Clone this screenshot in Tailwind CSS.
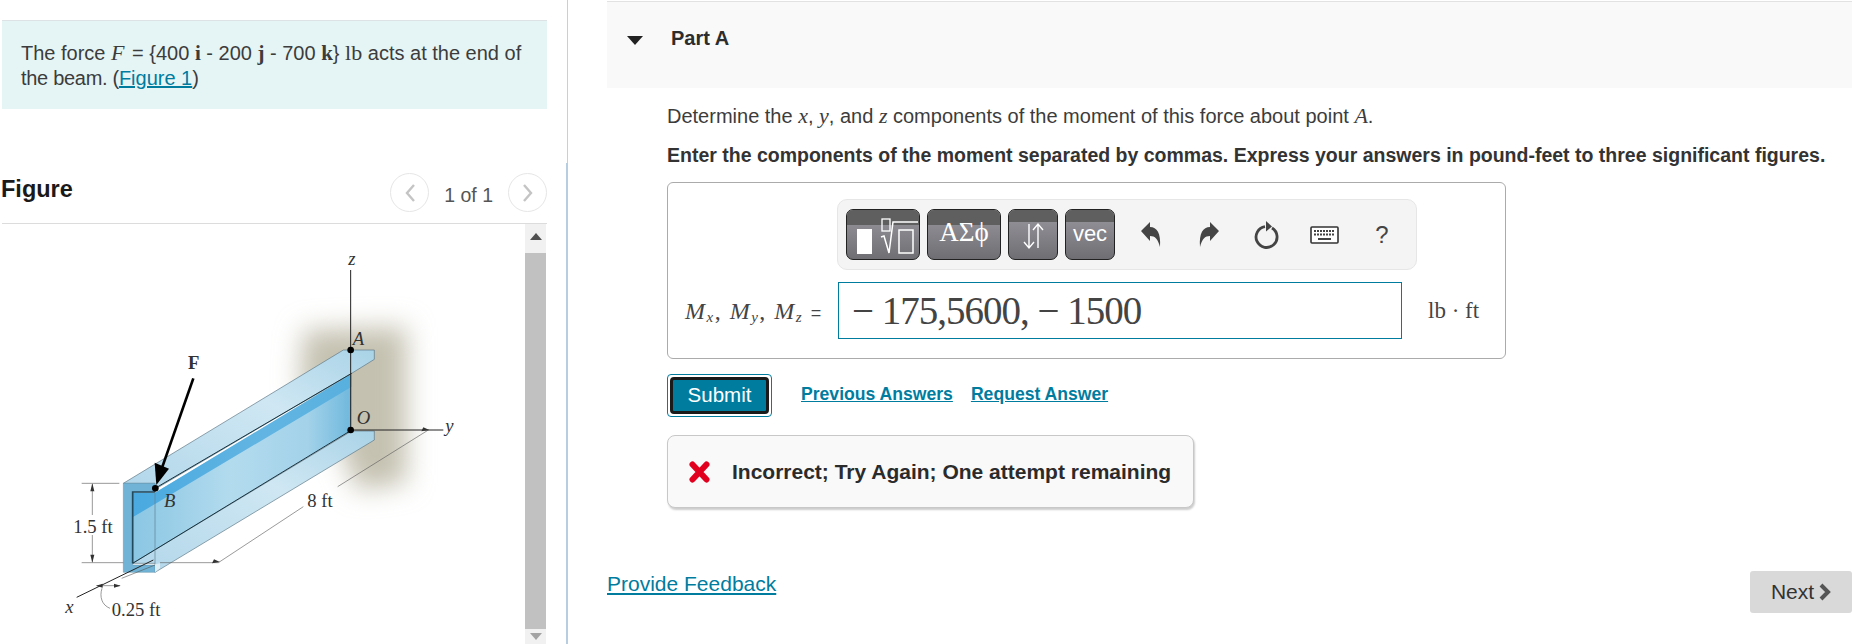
<!DOCTYPE html>
<html lang="en">
<head>
  <meta charset="UTF-8" />
  <title>Part A</title>
  <script src="https://cdn.jsdelivr.net/npm/@tailwindcss/browser@4"></script>
</head>
<body class="bg-white h-[644px] overflow-hidden flex font-['Liberation_Sans',Arial,sans-serif] text-[#333]">

  <!-- Left column -->
  <div class="w-[566px] h-[644px] shrink-0 pl-[2px] pt-[20px] overflow-hidden">
    <div class="w-[545px] h-[89px] bg-[#e5f5f6] border-t border-[#dde3e4] pl-[19px] pt-[19px] text-[20px] leading-[25px] text-[#3c3c3c]">
      The force <i class="font-['Liberation_Serif',serif] text-[22px] mr-[2px]">F</i> = {400 <b class="font-['Liberation_Serif',serif] text-[21px]">i</b> - 200 <b class="font-['Liberation_Serif',serif] text-[21px]">j</b> - 700 <b class="font-['Liberation_Serif',serif] text-[21px]">k</b>} <span class="font-['Liberation_Serif',serif] text-[22px]">lb</span> acts at the end of<br>
      <span class="tracking-[-0.3px]">the beam. (</span><a class="text-[#007c9f] underline">Figure 1</a>)
    </div>

    <div class="w-[545px] h-[115px] border-b border-[#dcdcdc] flex items-end justify-between pb-[11px]">
      <h2 class="text-[23.5px] leading-[28px] font-bold text-[#1a1a1a] mb-[9px] ml-[-1px]">Figure</h2>
      <div class="flex items-center gap-[15px]">
        <button class="w-[39px] h-[39px] rounded-full border border-[#e6e6e6] flex items-center justify-center">
          <svg width="12" height="20" viewBox="0 0 12 20" fill="none" stroke="#c4c4c4" stroke-width="2.4"><path d="M10 2 3 10l7 8"/></svg>
        </button>
        <span class="text-[19.5px] text-[#555] relative top-[3px]">1 of 1</span>
        <button class="w-[39px] h-[39px] rounded-full border border-[#e6e6e6] flex items-center justify-center">
          <svg width="12" height="20" viewBox="0 0 12 20" fill="none" stroke="#c4c4c4" stroke-width="2.4"><path d="M2 2l7 8-7 8"/></svg>
        </button>
      </div>
    </div>

    <div class="relative w-[545px] h-[420px]">
      <svg class="absolute left-[38px] top-[6px]" width="420" height="414" viewBox="0 0 1260 1242">
        <defs>
          <filter id="blur" x="-50%" y="-50%" width="200%" height="200%"><feGaussianBlur stdDeviation="40"/></filter>
          <filter id="soft"><feGaussianBlur stdDeviation="1.2"/></filter>
          <linearGradient id="web" x1="0" y1="0" x2="1" y2="0">
            <stop offset="0" stop-color="#8ac6e3"/><stop offset="0.45" stop-color="#b3dbee"/><stop offset="0.8" stop-color="#a3d2e9"/><stop offset="1" stop-color="#6fb8dd"/>
          </linearGradient>
          <linearGradient id="band" x1="0" y1="0" x2="1" y2="0">
            <stop offset="0" stop-color="#4aa9e0"/><stop offset="0.6" stop-color="#62b5e2"/><stop offset="1" stop-color="#58b0de"/>
          </linearGradient>
          <linearGradient id="flange" x1="0" y1="1" x2="1" y2="0">
            <stop offset="0" stop-color="#b2d7ea"/><stop offset="0.6" stop-color="#cfe7f3"/><stop offset="1" stop-color="#a9d3e7"/>
          </linearGradient>
        </defs>
        <path d="M790 300 1100 290 1100 760 950 780 880 600 780 480Z" fill="#c4c1b0" filter="url(#blur)"/>
        <g filter="url(#soft)">
          <!-- channel -->
          <path d="M278 788 345 788 935 432V600L278 1000Z" fill="url(#web)"/>
          <path d="M278 788 345 788 935 432V470L278 862Z" fill="url(#band)"/>
          <path d="M250 760 910 360H1003V388L935 430 350 775 345 760Z" fill="url(#flange)" stroke="#5c7684" stroke-width="2"/>
          <path d="M278 1000 935 603H1003V630L345 1027 345 1000Z" fill="url(#flange)" stroke="#5c7684" stroke-width="2"/>
          <path d="M250 760H345V786H278V1005H345V1027H250Z" fill="#6fb3d6" stroke="#5f8ea6" stroke-width="1.5"/>
          <path d="M335 1005H345V1027L360 1015V1000Z" fill="#dcedf5"/>
          <path d="M278 1000V786H345" fill="none" stroke="#24495c" stroke-width="5"/>
          <path d="M278 1000 935 600M345 775 935 430" fill="none" stroke="#17323f" stroke-width="3"/>
          <path d="M345 785V1000" stroke="#5d7f90" stroke-width="2"/>
          <!-- axes -->
          <path d="M932 120V600M935 600H1210M110 1102 340 990" fill="none" stroke="#222" stroke-width="3"/>
          <!-- dimensions -->
          <g fill="none" stroke="#555" stroke-width="1.8">
            <path d="M125 760H238M125 998H250M157 762V855M157 915V996M360 998H535M535 998 790 830M893 770 1165 600"/>
            <path d="M170 1067H240M245 1045 345 1005M186 1075C178 1100 185 1125 210 1135"/>
          </g>
          <path d="M157 760l-6 24h12ZM157 998l-6-24h12ZM540 996l-24 4 6 -12ZM1168 600l-24 4 6 -12ZM168 1067l20-6v12ZM242 1067l-20-6v12Z" fill="#333"/>
          <!-- force -->
          <path d="M460 445 362 725" stroke="#000" stroke-width="8" fill="none"/>
          <path d="M349 765 344 698 387 716Z" fill="#000"/>
          <circle cx="932" cy="360" r="10" fill="#000"/><circle cx="932" cy="600" r="10" fill="#000"/><circle cx="346" cy="775" r="10" fill="#000"/>
        </g>
        <g font-family="Liberation Serif, serif" fill="#333" font-size="56">
          <text x="925" y="104" font-style="italic">z</text>
          <text x="444" y="418" font-weight="bold">F</text>
          <text x="938" y="345" font-style="italic">A</text>
          <text x="950" y="582" font-style="italic">O</text>
          <text x="1216" y="606" font-style="italic">y</text>
          <text x="372" y="830" font-style="italic">B</text>
          <text x="802" y="830">8 ft</text>
          <text x="100" y="910">1.5 ft</text>
          <text x="215" y="1158">0.25 ft</text>
          <text x="76" y="1148" font-style="italic">x</text>
        </g>
      </svg>
      <!-- scrollbar -->
      <div class="absolute left-[523px] top-0 w-[21px] h-[420px] bg-[#f1f1f1] flex flex-col items-center">
        <div class="w-0 h-0 mt-[9px] border-x-[6px] border-x-transparent border-b-[7px] border-b-[#505050]"></div>
        <div class="w-[21px] h-[376px] mt-[13px] bg-[#c1c1c1]"></div>
        <div class="w-0 h-0 mt-[4px] border-x-[6px] border-x-transparent border-t-[7px] border-t-[#a3a3a3]"></div>
      </div>
    </div>
  </div>

  <!-- Pane divider -->
  <div class="w-[2px] h-[644px] shrink-0 flex flex-col items-end">
    <div class="w-[1px] h-[163px] bg-[#c5d0dd]"></div>
    <div class="w-[2px] flex-1 bg-[#b9cde1]"></div>
  </div>

  <!-- Right column -->
  <div class="flex-1 pl-[39px] pr-[9px] pt-[1px] relative">
    <div class="h-[87px] bg-[#f9f9f9] border-t border-[#e2e2e2] flex items-start pt-[24px] pl-[20px]">
      <div class="w-0 h-0 mt-[10px] border-x-[8px] border-x-transparent border-t-[9px] border-t-[#222]"></div>
      <h3 class="ml-[28px] text-[20px] leading-[24px] font-bold text-[#2d2d2d]">Part A</h3>
    </div>

    <div class="pl-[60px]">
      <p class="mt-[16px] text-[20px] leading-[24px] text-[#3c3c3c] whitespace-nowrap">Determine the <i class="font-['Liberation_Serif',serif] text-[22px]">x</i>, <i class="font-['Liberation_Serif',serif] text-[22px]">y</i>, and <i class="font-['Liberation_Serif',serif] text-[22px]">z</i> components of the moment of this force about point <i class="font-['Liberation_Serif',serif] text-[22px]">A</i>.</p>
      <p class="mt-[15px] text-[19.5px] leading-[24px] font-bold text-[#333] whitespace-nowrap">Enter the components of the moment separated by commas. Express your answers in pound-feet to three significant figures.</p>

      <!-- Answer box -->
      <div class="mt-[15px] w-[839px] h-[177px] border border-[#ababab] rounded-[6px] relative">
        <div class="ml-[169px] mt-[16px] w-[580px] h-[71px] bg-[#f4f4f4] border border-[#e6e6e6] rounded-[10px] flex items-center pl-[8px]">
          <div class="flex gap-[7px]">
            <button class="relative w-[74px] h-[51px] rounded-[7px] border border-[#222] overflow-hidden bg-gradient-to-b from-[#9b98a0] to-[#6f6f73]">
              <span class="absolute inset-x-0 top-0 h-[15px] bg-[#5f5f5f]"></span>
              <svg class="absolute inset-0" width="72" height="49" viewBox="0 0 72 49" fill="none">
                <rect x="10" y="19" width="15" height="25" fill="#fff"/>
                <rect x="35" y="9" width="8" height="12" stroke="#fff" stroke-width="1.3"/>
                <path d="M34 27l3-1 5 17 4-31h25" stroke="#fff" stroke-width="1.5"/>
                <rect x="52" y="20" width="14" height="23" stroke="#fff" stroke-width="1.5"/>
              </svg>
            </button>
            <button class="relative w-[74px] h-[51px] rounded-[7px] border border-[#222] overflow-hidden bg-gradient-to-b from-[#9b98a0] to-[#6f6f73] text-white font-['Liberation_Serif',serif] text-[27px]">
              <span class="absolute inset-x-0 top-0 h-[15px] bg-[#5f5f5f]"></span>
              <span class="relative top-[-2px]">ΑΣϕ</span>
            </button>
            <button class="relative w-[50px] h-[51px] rounded-[7px] border border-[#222] overflow-hidden bg-gradient-to-b from-[#9b98a0] to-[#6f6f73]">
              <span class="absolute inset-x-0 top-0 h-[12px] bg-[#5f5f5f]"></span>
              <svg class="absolute inset-0" width="48" height="49" viewBox="0 0 48 49" fill="none" stroke="#fff" stroke-width="1.4">
                <path d="M20 14V38M15 32l5 6 5-6M29 38V14M24 20l5-6 5 6"/>
              </svg>
            </button>
            <button class="relative w-[50px] h-[51px] rounded-[7px] border border-[#222] overflow-hidden bg-gradient-to-b from-[#9b98a0] to-[#6f6f73] text-white text-[22px]">
              <span class="absolute inset-x-0 top-0 h-[12px] bg-[#5f5f5f]"></span>
              <span class="relative top-[-1px]">vec</span>
            </button>
          </div>
          <div class="flex ml-[7px] items-center">
            <div class="w-[58px] flex justify-center">
              <svg width="22" height="26" viewBox="0 0 22 26" fill="#444"><path d="M1 9 10 0v5c7 0 11 6 10 20-2-8-5-11-10-11v5Z"/></svg>
            </div>
            <div class="w-[58px] flex justify-center">
              <svg width="22" height="26" viewBox="0 0 22 26" fill="#444"><path d="M21 9 12 0v5C5 5 1 11 2 25c2-8 5-11 10-11v5Z"/></svg>
            </div>
            <div class="w-[57px] flex justify-center">
              <svg width="26" height="30" viewBox="0 0 26 30" fill="none"><path d="M11 6.6a10.5 10.5 0 1 0 7 1.4" stroke="#444" stroke-width="2.8"/><path d="M12 1l6 5.5-6 5Z" fill="#444"/></svg>
            </div>
            <div class="w-[58px] flex justify-center items-center">
              <svg width="29" height="18" viewBox="0 0 29 18" fill="none"><rect x="1" y="1" width="27" height="16" rx="1" fill="#fff" stroke="#333" stroke-width="1.6"/><path d="M4 5h21M4 8.5h21" stroke="#444" stroke-width="2" stroke-dasharray="2 1"/><path d="M8 13h13" stroke="#444" stroke-width="2"/></svg>
            </div>
            <div class="w-[58px] text-center text-[24px] leading-[28px] text-[#444]">?</div>
          </div>
        </div>

        <div class="flex items-center mt-[12px] h-[57px]">
          <div class="w-[170px] pl-[17px] shrink-0 font-['Liberation_Serif',serif] text-[24px] tracking-[1.5px] text-[#444] whitespace-nowrap">
            <i>M<sub class="text-[15px]">x</sub></i>, <i>M<sub class="text-[15px]">y</sub></i>, <i>M<sub class="text-[15px]">z</sub></i> <span class="font-['Liberation_Sans',sans-serif] text-[18px]">=</span>
          </div>
          <div class="w-[564px] h-[57px] border border-[#007c9f] pl-[13px] pt-[1px] font-['Liberation_Serif',serif] text-[39px] tracking-[-1px] leading-[53px] text-[#444] whitespace-nowrap">− 175,5600, − 1500</div>
          <div class="ml-[26px] mt-[2px] font-['Liberation_Serif',serif] text-[23px] text-[#444] whitespace-nowrap">lb · ft</div>
        </div>
      </div>

      <!-- Actions -->
      <div class="flex items-center mt-[15px]">
        <div class="w-[105px] h-[43px] border border-[#007c9f] rounded-[4px] p-[2px]">
          <button class="w-full h-full bg-[#007c9f] border-[3px] border-[#1a1a1a] rounded-[4px] text-white text-[20.5px] leading-none">Submit</button>
        </div>
        <a class="ml-[29px] mt-[-2px] text-[17.6px] font-bold text-[#007c9f] underline">Previous Answers</a>
        <a class="ml-[18px] mt-[-2px] text-[17.6px] font-bold text-[#007c9f] underline">Request Answer</a>
      </div>

      <!-- Feedback -->
      <div class="mt-[18px] w-[527px] h-[73px] bg-[#f9f9f9] border border-[#c8c8c8] rounded-[8px] shadow-[1px_2px_2px_rgba(0,0,0,0.2)] flex items-center pl-[21px]">
        <svg width="21" height="22" viewBox="0 0 21 22" fill="none"><path d="M3.5 3.5 17.5 18.5M17.5 3.5 3.5 18.5" stroke="#e2001f" stroke-width="6" stroke-linecap="round"/></svg>
        <span class="ml-[22px] text-[21px] font-bold text-[#2b2b2b] whitespace-nowrap">Incorrect; Try Again; One attempt remaining</span>
      </div>
    </div>

    <div class="flex items-start justify-between mt-[63px]">
      <a class="text-[21px] leading-[26px] text-[#007c9f] underline">Provide Feedback</a>
      <button class="w-[102px] h-[42px] bg-[#d9d9d9] rounded-[3px] text-[21px] text-[#333] flex items-center justify-center gap-[4px]">
        Next
        <svg width="13" height="20" viewBox="0 0 13 20" fill="none"><path d="M3 3l7 7-7 7" stroke="#555" stroke-width="4"/></svg>
      </button>
    </div>
  </div>
</body>
</html>
